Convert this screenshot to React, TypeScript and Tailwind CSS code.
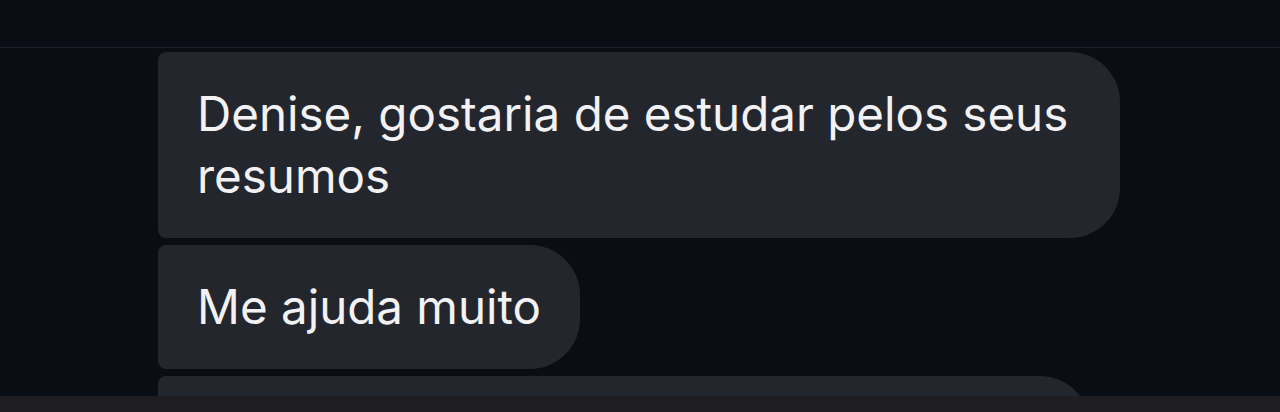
import React from 'react';

const Bubble: React.FC<{ children?: React.ReactNode; width?: string }> = ({ children, width = 'w-fit max-w-[962px]' }) => (
    <div
        className={`${width} shrink-0 rounded-l-lg rounded-r-[50px] bg-[#24262d] px-[39px] py-[31px] text-[47.5px] leading-[62px] text-[#f2f2f4]`}
    >
        {children}
    </div>
);

export default function App() {
    return (
        <div className="flex h-[412px] w-[1280px] flex-col overflow-hidden bg-[#0b0d15]" style={{ fontFamily: 'Inter, "Noto Sans", sans-serif' }}>
            <div className="h-[48px] shrink-0 border-b border-[#1c1f27]" />
            <div className="flex flex-1 flex-col gap-[7px] overflow-hidden pl-[158px] pt-[4px]">
                <Bubble>Denise, gostaria de estudar pelos seus resumos</Bubble>
                <Bubble>Me ajuda muito</Bubble>
                <Bubble width="w-[932px] h-[124px]" />
            </div>
            <div className="h-[16px] shrink-0 bg-[#1e1e21]" />
        </div>
    );
}
